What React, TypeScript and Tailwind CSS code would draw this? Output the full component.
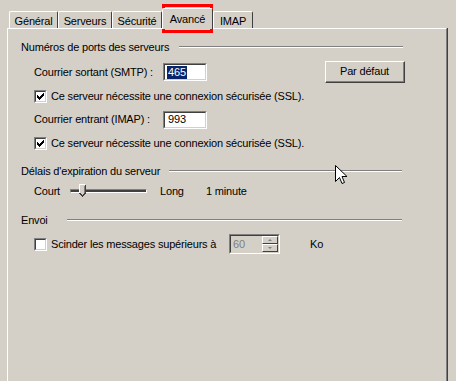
import React from 'react';

const CHECK_PIXELS = [
  [6, 0], [5, 1], [6, 1], [0, 2], [4, 2], [5, 2], [6, 2],
  [0, 3], [1, 3], [3, 3], [4, 3], [5, 3],
  [0, 4], [1, 4], [2, 4], [3, 4], [4, 4],
  [1, 5], [2, 5], [3, 5], [2, 6],
];

function Sunken({ className, inner, children }: { className: string; inner: string; children?: React.ReactNode }) {
  return (
    <div className={`flex border border-t-[#808080] border-l-[#808080] border-b-white border-r-white ${className}`}>
      <div className={`flex flex-1 border border-t-[#404040] border-l-[#404040] border-b-[#d4d0c8] border-r-[#d4d0c8] ${inner}`}>
        {children}
      </div>
    </div>
  );
}

function Checkbox({ checked }: { checked: boolean }) {
  return (
    <Sunken className="h-[13px] w-[13px] shrink-0" inner="bg-white items-center justify-center">
      {checked && (
        <svg width="7" height="7" viewBox="0 0 7 7" shapeRendering="crispEdges">
          {CHECK_PIXELS.map(([x, y]) => (
            <rect key={`${x}-${y}`} x={x} y={y} width="1" height="1" fill="#000" />
          ))}
        </svg>
      )}
    </Sunken>
  );
}

function Etch() {
  return <div className="h-0 flex-1 border-t border-b border-t-[#808080] border-b-white" />;
}

function Tab({ label, w, selected }: { label: string; w: string; selected?: boolean }) {
  if (selected) {
    return (
      <div className={`relative z-10 -mb-px flex h-[21px] items-start justify-center rounded-t-[2px] border-t border-l border-r border-t-white border-l-white border-r-[#404040] bg-[#d4d0c8] pt-[4px] ${w}`}>
        {label}
      </div>
    );
  }
  return (
    <div className={`flex h-[17px] items-start justify-center rounded-t-[2px] border-t border-l border-r border-t-white border-l-white border-r-[#404040] pt-[3px] ${w}`}>
      {label}
    </div>
  );
}

export default function App() {
  return (
    <div className="relative h-[381px] w-[456px] overflow-hidden bg-[#d4d0c8] text-[11px] leading-[13px] tracking-[-0.18px] text-black [font-family:'Liberation_Sans',Arial,sans-serif]">
      {/* Tabs */}
      <div className="flex h-[28px] items-end pl-[9px]">
        <Tab label="Général" w="w-[49px]" />
        <Tab label="Serveurs" w="w-[54px]" />
        <Tab label="Sécurité" w="w-[50px]" />
        <Tab label="Avancé" w="w-[51px]" selected />
        <Tab label="IMAP" w="w-[40px]" />
      </div>

      {/* Panel */}
      <div className="pl-[7px]">
        <div className="h-[353px] w-[441px] border-r border-r-[#404040]">
          <div className="h-full border-t border-l border-r border-t-white border-l-white border-r-[#808080] pl-[13px] pt-[11px]">
            {/* Ports */}
            <div className="flex h-[14px] w-[382px] items-center">
              <span className="w-[158px]">Numéros de ports des serveurs</span>
              <Etch />
            </div>
            <div className="ml-[13px] mt-[6px] flex h-[24px] w-[371px] items-center">
              <span className="w-[129px]">Courrier sortant (SMTP) :</span>
              <Sunken className="h-[18px] w-[44px]" inner="bg-white items-center pl-[2px]">
                <span className="bg-[#0a246a] px-px text-white">465</span>
              </Sunken>
              <button className="ml-auto flex h-[22px] w-[80px] border border-t-white border-l-white border-b-[#404040] border-r-[#404040]">
                <span className="flex flex-1 items-center justify-center border-b border-r border-b-[#808080] border-r-[#808080]">
                  Par défaut
                </span>
              </button>
            </div>
            <div className="ml-[13px] mt-[5px] flex h-[14px] items-center gap-[4px]">
              <Checkbox checked />
              <span>Ce serveur nécessite une connexion sécurisée (SSL).</span>
            </div>
            <div className="ml-[13px] mt-[7px] flex h-[19px] items-center">
              <span className="w-[129px]">Courrier entrant (IMAP) :</span>
              <Sunken className="h-[18px] w-[44px]" inner="bg-white items-center pl-[3px]">
                <span>993</span>
              </Sunken>
            </div>
            <div className="ml-[13px] mt-[7px] flex h-[14px] items-center gap-[4px]">
              <Checkbox checked />
              <span>Ce serveur nécessite une connexion sécurisée (SSL).</span>
            </div>

            {/* Timeout */}
            <div className="mt-[14px] flex h-[14px] w-[381px] items-center">
              <span className="w-[148px]">Délais d'expiration du serveur</span>
              <Etch />
            </div>
            <div className="ml-[13px] mt-[5px] flex h-[16px] items-center">
              <span className="w-[36px]">Court</span>
              <div className="relative flex h-[16px] w-[77px] items-center">
                <div className="h-[4px] w-full border border-t-[#808080] border-l-[#808080] border-b-white border-r-white bg-[#404040]" />
                <svg className="absolute left-[9px] top-[1px]" width="7" height="13" viewBox="0 0 7 13" shapeRendering="crispEdges">
                  <path d="M0.5 9 V0.5 H6.5 V9 L3.5 12 Z" fill="#d4d0c8" />
                  <path d="M0.5 9 V0.5 H5.5" fill="none" stroke="#fff" />
                  <path d="M6.5 0.5 V9 L3.5 12 L0.5 9" fill="none" stroke="#404040" />
                  <path d="M5.5 1.5 V8.5" fill="none" stroke="#808080" />
                </svg>
              </div>
              <span className="ml-[13px] w-[46px]">Long</span>
              <span>1 minute</span>
            </div>

            {/* Envoi */}
            <div className="mt-[14px] flex h-[14px] w-[381px] items-center">
              <span className="w-[46px]">Envoi</span>
              <Etch />
            </div>
            <div className="ml-[13px] mt-[7px] flex h-[20px] items-center">
              <Checkbox checked={false} />
              <span className="ml-[4px] w-[178px]">Scinder les messages supérieurs à</span>
              <Sunken className="h-[20px] w-[51px]" inner="bg-[#d4d0c8] items-center">
                <span className="flex-1 pl-[2px] text-[#808080]">60</span>
                <div className="flex h-full w-[16px] flex-col">
                  <div className="flex flex-1 items-center justify-center border border-t-white border-l-white border-b-[#404040] border-r-[#404040]">
                    <span className="h-0 w-0 border-x-[2px] border-b-[2px] border-x-transparent border-b-[#808080]" />
                  </div>
                  <div className="flex flex-1 items-center justify-center border border-t-white border-l-white border-b-[#404040] border-r-[#404040]">
                    <span className="h-0 w-0 border-x-[2px] border-t-[2px] border-x-transparent border-t-[#808080]" />
                  </div>
                </div>
              </Sunken>
              <span className="ml-[30px]">Ko</span>
            </div>
          </div>
        </div>
      </div>

      {/* Highlight around selected tab */}
      <div className="absolute left-[162px] top-[4px] h-[29px] w-[51px] border-[3px] border-[#ff0000]" />

      {/* Mouse pointer */}
      <svg className="absolute left-[335px] top-[165px]" width="13" height="21" viewBox="0 0 13 21">
        <path d="M0.5 0.5 V16.5 L4.5 12.5 L7 18.5 L9.5 17.5 L7 11.5 H12 Z" fill="#fff" stroke="#000" strokeLinejoin="miter" />
      </svg>
    </div>
  );
}
